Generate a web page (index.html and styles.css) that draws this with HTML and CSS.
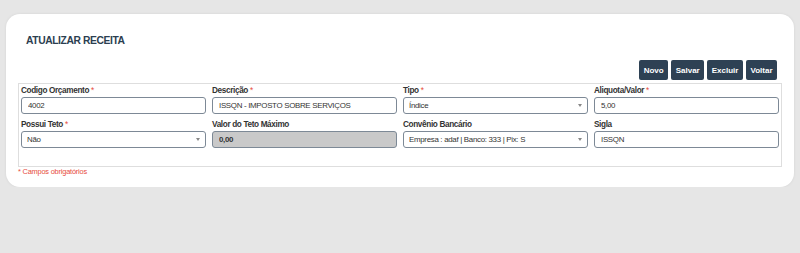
FILE: index.html
```html
<!DOCTYPE html>
<html lang="pt-BR">
<head>
    <meta charset="UTF-8">
    <meta name="viewport" content="width=device-width, initial-scale=1.0">
    <title>Atualizar Receita</title>
    <link rel="stylesheet" href="styles.css">
</head>
<body>
    <div class="card">
        <h2 class="page-title">ATUALIZAR RECEITA</h2>

        <div class="actions">
            <button class="btn" type="button">Novo</button>
            <button class="btn" type="submit">Salvar</button>
            <button class="btn" type="button">Excluir</button>
            <button class="btn" type="button">Voltar</button>
        </div>

        <form class="form-box">
            <div class="form-group">
                <label for="codigo">Codigo Orçamento <span class="req">*</span></label>
                <input type="text" id="codigo" value="4002">
            </div>
            <div class="form-group">
                <label for="descricao">Descrição <span class="req">*</span></label>
                <input type="text" id="descricao" value="ISSQN - IMPOSTO SOBRE SERVIÇOS">
            </div>
            <div class="form-group">
                <label for="tipo">Tipo <span class="req">*</span></label>
                <div class="select-wrap">
                    <select id="tipo">
                        <option>Índice</option>
                    </select>
                    <span class="caret"></span>
                </div>
            </div>
            <div class="form-group">
                <label for="aliquota">Aliquota/Valor <span class="req">*</span></label>
                <input type="text" id="aliquota" value="5,00">
            </div>

            <div class="form-group">
                <label for="teto">Possui Teto <span class="req">*</span></label>
                <div class="select-wrap">
                    <select id="teto">
                        <option>Não</option>
                    </select>
                    <span class="caret"></span>
                </div>
            </div>
            <div class="form-group">
                <label for="valorTeto">Valor do Teto Máximo</label>
                <input type="text" id="valorTeto" value="0,00" class="disabled" disabled>
            </div>
            <div class="form-group">
                <label for="convenio">Convênio Bancário</label>
                <div class="select-wrap">
                    <select id="convenio">
                        <option>Empresa : adaf | Banco: 333 | Pix: S</option>
                    </select>
                    <span class="caret"></span>
                </div>
            </div>
            <div class="form-group">
                <label for="sigla">Sigla</label>
                <input type="text" id="sigla" value="ISSQN">
            </div>
        </form>

        <p class="required-note">* Campos obrigatórios</p>
    </div>
</body>
</html>
```

FILE: styles.css
```css
/* General Styles */
* {
    margin: 0;
    padding: 0;
    box-sizing: border-box;
}

body, button, input, select, label {
    font-family: Arial, "Liberation Sans", sans-serif;
}

body {
    background-color: #e6e6e6;
    color: #333;
    padding: 14px 6px 0;
}

.card {
    background-color: #fff;
    border-radius: 14px;
    box-shadow: 0 0 3px rgba(0, 0, 0, 0.08);
    padding: 20px 12px 11px;
    height: 173px;
}

.page-title {
    font-size: 10.3px;
    line-height: 14px;
    letter-spacing: -0.4px;
    font-weight: bold;
    color: #2c3e50;
    margin-left: 8px;
}

.actions {
    display: flex;
    justify-content: flex-end;
    gap: 3px;
    margin: 12px 5px 3px 0;
}

.btn {
    height: 20px;
    padding: 0 4.5px;
    background-color: #2e4154;
    border: none;
    border-radius: 2px;
    color: #fff;
    font-size: 8px;
    font-weight: bold;
}

.form-box {
    display: grid;
    grid-template-columns: repeat(4, 1fr);
    grid-auto-rows: 30px;
    column-gap: 6px;
    row-gap: 4px;
    border: 1px solid #dedede;
    padding: 0 2px;
    height: 84px;
}

.form-group label {
    display: block;
    height: 13px;
    font-size: 8.2px;
    line-height: 13px;
    letter-spacing: -0.35px;
    font-weight: bold;
    color: #333;
}

.req {
    color: #e74c3c;
    font-weight: normal;
}

input[type="text"], select {
    display: block;
    width: 100%;
    height: 17px;
    padding: 0 6px;
    border: 1px solid #7d8996;
    border-radius: 3px;
    background-color: #fff;
    color: #333;
    font-size: 7.9px;
    letter-spacing: -0.3px;
    outline: none;
}

input.disabled {
    background-color: #c9c9c9;
    font-weight: bold;
}

.select-wrap {
    position: relative;
}

select {
    appearance: none;
    -webkit-appearance: none;
    padding-left: 5px;
}

.caret {
    position: absolute;
    right: 6px;
    top: 7px;
    border-left: 2px solid transparent;
    border-right: 2px solid transparent;
    border-top: 3px solid #888;
}

.required-note {
    font-size: 7.4px;
    line-height: 9px;
    letter-spacing: -0.2px;
    color: #e74c3c;
}
```
